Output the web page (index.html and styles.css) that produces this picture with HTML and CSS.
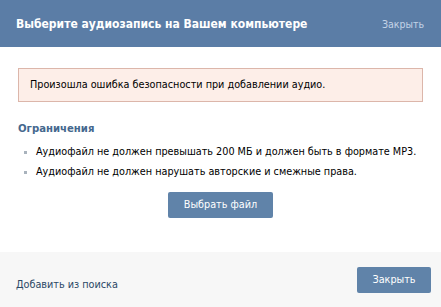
FILE: index.html
```html
<!DOCTYPE html>
<html lang="ru">
<head>
    <meta charset="UTF-8">
    <title>Выберите аудиозапись</title>
    <link rel="stylesheet" href="styles.css">
</head>
<body>
<div class="box">
    <div class="box_title">
        <span class="box_title_text">Выберите аудиозапись на Вашем компьютере</span>
        <a class="box_x">Закрыть</a>
    </div>
    <div class="box_body">
        <div class="error">Произошла ошибка безопасности при добавлении аудио.</div>
        <div class="limits_head">Ограничения</div>
        <ul class="limits">
            <li>Аудиофайл не должен превышать 200 МБ и должен быть в формате MP3.</li>
            <li>Аудиофайл не должен нарушать авторские и смежные права.</li>
        </ul>
        <div class="upload_wrap"><a class="button">Выбрать файл</a></div>
    </div>
    <div class="box_controls">
        <a class="search_link">Добавить из поиска</a>
        <a class="button">Закрыть</a>
    </div>
</div>
</body>
</html>
```

FILE: styles.css
```css
body{ margin:0; background:#fff; font-family:"DejaVu Sans Condensed","DejaVu Sans",sans-serif; font-size:10.75px; color:#000; }
a{ cursor:pointer; }
.box{ width:441px; height:307px; display:flex; flex-direction:column; }
.box_title{ height:47px; background:#5b7da6; display:flex; align-items:center; justify-content:space-between; padding:0 17px 0 16px; box-sizing:border-box; }
.box_title_text{ color:#fff; font-weight:bold; font-size:12px; }
.box_x{ color:#c3d3e6; font-size:10.5px; }
.box_body{ flex:1; padding:21px 18px 0 18px; }
.error{ background:#fdeee8; border:1px solid #dcb6aa; height:32px; line-height:32px; padding:0 11px; }
.limits_head{ color:#45688e; font-weight:bold; margin-top:20px; font-size:11.25px; }
.limits{ list-style:none; margin:7px 0 0 0; padding:0; }
.limits li{ position:relative; padding-left:18px; line-height:20px; white-space:nowrap; }
.limits li:before{ content:""; position:absolute; left:6px; top:9px; width:3px; height:3px; background:#a9b3bd; }
.upload_wrap{ text-align:center; margin-top:10px; }
.button{ display:inline-block; background:#6083a9; color:#fff; height:26px; line-height:26px; padding:0 16px; border-radius:2px; box-sizing:border-box; }
.box_controls{ height:55px; background:#f7f7f7; display:flex; align-items:center; justify-content:space-between; padding:0 10px 0 16px; }
.box_controls .button{ width:74px; text-align:center; padding:0; }
.search_link{ color:#2b4866; margin-top:9px; }
```
